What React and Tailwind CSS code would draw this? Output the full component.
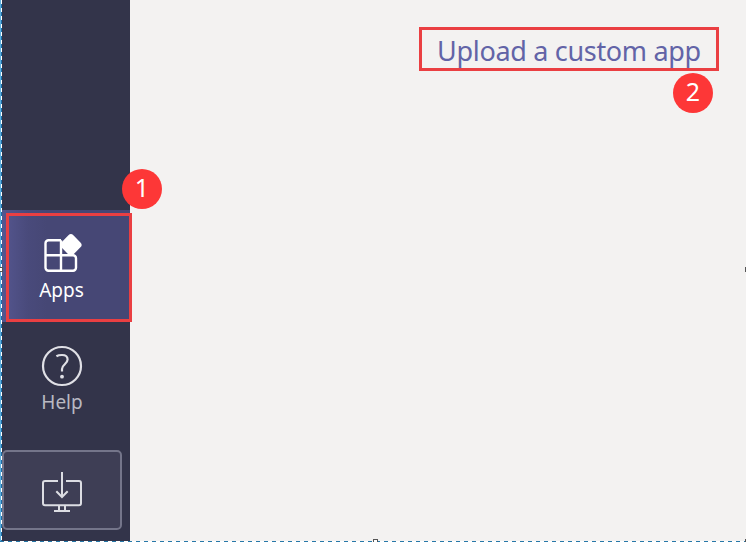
function AppsIcon() {
  return (
    <svg className="block h-[40px] w-[40px]" viewBox="43 233 40 40" fill="none" stroke="#fff" strokeWidth="2.4">
      <path d="M61 240.2H48.5a3 3 0 0 0-3 3V267.8a3 3 0 0 0 3 3H73a3 3 0 0 0 3-3V258.300a3 3 0 0 0-3-3H45.500M61 240.200V270.800" />
      <rect x="62.400" y="236.400" width="17" height="17" rx="3.500" transform="rotate(45 70.900 244.900)" fill="#fff" stroke="none" />
    </svg>
  );
}

function HelpIcon() {
  return (
    <svg className="block h-[42px] w-[42px]" viewBox="41 345 42 42" fill="none" stroke="#e0e0e6" strokeWidth="2.2">
      <circle cx="62" cy="366" r="19" />
      <path d="M56.4 356.3Q58.500 355 62 355Q67.600 355 67.600 359.500C67.600 364 62 364.500 62 369V371.500" />
      <circle cx="62" cy="376.700" r="1.900" fill="#e0e0e6" stroke="none" />
    </svg>
  );
}

function DownloadIcon() {
  return (
    <svg className="block h-[42px] w-[42px]" viewBox="41 471 42 42" fill="none" stroke="#dcdde3" strokeWidth="2">
      <path d="M58 481H45a2 2 0 0 0-2 2V503.300a2 2 0 0 0 2 2H79a2 2 0 0 0 2-2V483a2 2 0 0 0-2-2H66M62 472V497M56.300 491.200L62 497L67.700 491.200M59 505V511M65 505V511M54 511H70" />
    </svg>
  );
}

function Badge({ children, className }) {
  return (
    <div className={"absolute flex h-10 w-10 justify-center rounded-full bg-[#fd3737] text-[25px] leading-[37px] text-white " + className}>
      {children}
    </div>
  );
}

export default function App() {
  return (
    <div className="relative flex h-[542px] w-[746px] overflow-hidden bg-[#f3f2f1] font-['Noto_Sans',sans-serif]">
      <nav className="flex w-[130px] flex-col bg-[#33344a] pl-0.5 pt-[210px]">
        <div className="flex h-28 flex-col items-center bg-[linear-gradient(90deg,#55568f,#494a7b_26px,#464775_45px)] pr-[7px] pt-[23px]">
          <AppsIcon />
          <span className="mt-[3px] -translate-x-px text-[19px] leading-7 text-white">Apps</span>
        </div>
        <div className="flex h-32 flex-col items-center pr-2 pt-[23px]">
          <HelpIcon />
          <span className="mt-px text-[19px] leading-7 text-[#b9b9c2]">Help</span>
        </div>
        <div className="flex h-20 w-[120px] justify-center rounded-[5px] border-2 border-[#74758a] bg-[#3e3e55] pt-[19px]">
          <DownloadIcon />
        </div>
      </nav>
      <main className="flex flex-1 justify-end pr-[27px] pt-[27px]">
        <div className="flex h-11 w-[300px] justify-center border-3 border-[#ea3f42]">
          <a className="whitespace-nowrap text-[27px] leading-[42px] tracking-[-0.32px] text-[#6264a7]">Upload a custom app</a>
        </div>
      </main>

      <div className="absolute left-[6px] top-[213px] h-[109px] w-[126px] border-3 border-[#ea3f42]" />
      <Badge className="left-[122px] top-[169px]">1</Badge>
      <Badge className="left-[673px] top-[73px]">2</Badge>

      <div className="absolute left-0 top-0 h-full w-px bg-[#5fb0e0]" />
      <div className="absolute left-px top-0 h-full w-px bg-[repeating-linear-gradient(180deg,#fff_0_4px,#1c6ea8_4px_8px)]" />
      <div className="absolute bottom-0 left-0 h-px w-full bg-[repeating-linear-gradient(90deg,#2878a8_0_4px,#fff_4px_8px)]" />
      <div className="absolute left-0 top-[267px] h-[5px] w-[3px] border border-l-0 border-[#555] bg-white" />
      <div className="absolute right-0 top-[267px] h-[5px] w-px bg-[#555]" />
      <div className="absolute bottom-0 left-[373px] h-[3px] w-[5px] border border-b-0 border-[#555] bg-white" />
      <div className="absolute bottom-0 right-0 h-[3px] w-px bg-[#555]" />
    </div>
  );
}
